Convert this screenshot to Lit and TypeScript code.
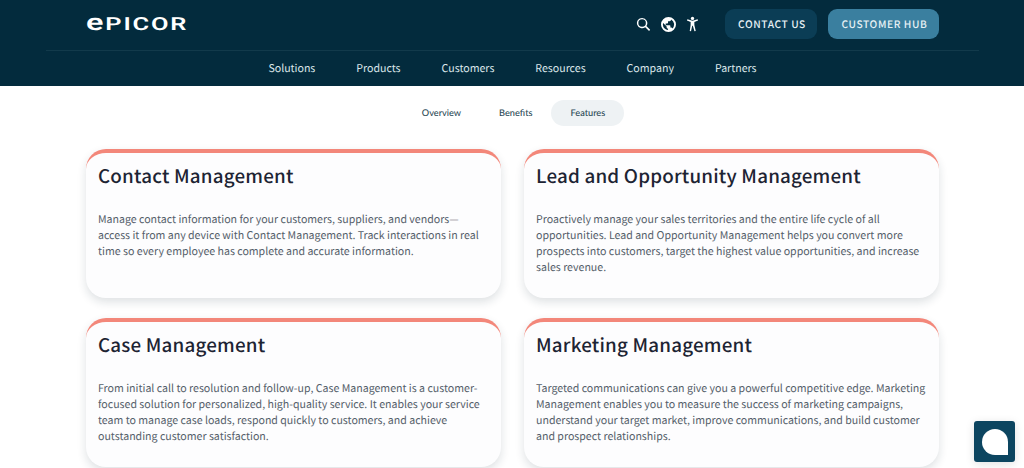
import { LitElement, html, css } from 'lit';
import { customElement } from 'lit/decorators.js';

const NAV = ['Solutions', 'Products', 'Customers', 'Resources', 'Company', 'Partners'];
const TABS = ['Overview', 'Benefits', 'Features'];
const CARDS = [
	{
		title: 'Contact Management',
		text: 'Manage contact information for your customers, suppliers, and vendors—access it from any device with Contact Management. Track interactions in real time so every employee has complete and accurate information.'
	},
	{
		title: 'Lead and Opportunity Management',
		text: 'Proactively manage your sales territories and the entire life cycle of all opportunities. Lead and Opportunity Management helps you convert more prospects into customers, target the highest value opportunities, and increase sales revenue.'
	},
	{
		title: 'Case Management',
		text: 'From initial call to resolution and follow-up, Case Management is a customer-focused solution for personalized, high-quality service. It enables your service team to manage case loads, respond quickly to customers, and achieve outstanding customer satisfaction.'
	},
	{
		title: 'Marketing Management',
		text: 'Targeted communications can give you a powerful competitive edge. Marketing Management enables you to measure the success of marketing campaigns, understand your target market, improve communications, and build customer and prospect relationships.'
	}
];

@customElement('app-root')
export class AppRoot extends LitElement {
	static styles = [
		css`
			:host {
				display: block;
				position: relative;
				height: 468px;
				overflow: hidden;
				background: #fff;
				font-family: 'Noto Sans CJK SC', 'Noto Sans', sans-serif;
				text-rendering: geometricPrecision;
			}

			/* header */
			.top {
				background: #032b3d;
				height: 86px;
				box-sizing: border-box;
				padding: 0 85px 0 86px;
			}
			.top-row {
				display: flex;
				align-items: center;
				height: 50px;
				border-bottom: 1px solid #123a4b;
				margin: 0 -40px;
				padding: 0 40px;
			}
			.logo {
				color: #fff;
				font: 600 18px/20px Roboto, sans-serif;
				letter-spacing: 1.3px;
				transform: scaleX(1.41);
				transform-origin: left center;
				margin: -2px 0 0;
				white-space: nowrap;
			}
			.logo b {
				font-weight: 600;
				font-size: 23px;
				line-height: 20px;
			}
			.tools {
				margin-left: auto;
				display: flex;
				align-items: center;
				gap: 10px;
				margin-top: -2px;
			}
			.tools svg {
				display: block;
				fill: #fff;
			}
			.btn {
				box-sizing: border-box;
				height: 30px;
				margin-top: -3px;
				padding-left: 2px;
				display: flex;
				align-items: center;
				justify-content: center;
				border-radius: 9px;
				color: #e6f0f4;
				font-size: 10.2px;
				font-weight: 500;
				letter-spacing: 0.6px;
			}
			.btn.contact {
				width: 92px;
				margin-left: 26px;
				background: #0b3d55;
			}
			.btn.hub {
				width: 111px;
				margin-left: 11px;
				background: #3a7f9f;
			}
			.nav {
				display: flex;
				justify-content: center;
				gap: 41px;
				height: 36px;
				align-items: center;
				color: #dbe6ea;
				font-size: 10.6px;
				padding-bottom: 2px;
				box-sizing: border-box;
			}

			/* anchor tabs */
			.tabs {
				display: flex;
				justify-content: center;
				align-items: center;
				height: 26px;
				margin-top: 14px;
				color: #2c4a56;
				font: 500 9.2px Lato, sans-serif;
				padding-left: 3px;
			}
			.tab {
				padding: 0 19px;
				height: 26px;
				line-height: 26px;
				border-radius: 13px;
			}
			.tab.active {
				background: #eef2f4;
			}

			/* cards */
			.cards {
				display: grid;
				grid-template-columns: 415px 415px;
				grid-auto-rows: 149px;
				column-gap: 23px;
				row-gap: 20px;
				padding: 23px 0 0 86px;
			}
			.card {
				box-sizing: border-box;
				border-top: 4px solid #f3877a;
				border-radius: 20px;
				background: #fdfdfe;
				box-shadow: 0 4px 10px rgba(20, 40, 60, 0.14);
				padding: 9px 12px 0;
			}
			.card h3 {
				margin: 0;
				font-size: 18.8px;
				line-height: 27px;
				font-weight: 500;
				color: #1d2433;
				letter-spacing: 0.2px;
			}
			.card p {
				margin: 22.5px 0 0;
				font-size: 10.6px;
				line-height: 16px;
				color: #55606a;
			}

			/* chat launcher */
			.chat {
				position: absolute;
				left: 974px;
				top: 421px;
				width: 41px;
				height: 41px;
				border-radius: 3px;
				background: #0c4560;
				display: flex;
				align-items: center;
				justify-content: center;
				box-shadow: 0 2px 10px rgba(0, 0, 0, 0.12);
			}
			.chat span {
				width: 26px;
				height: 26px;
				background: #fff;
				border-radius: 50% 50% 0 50%;
			}
		`
	];

	render() {
		return html`
			<div class="top">
				<div class="top-row">
					<div class="logo"><b>e</b>PICOR</div>
					<div class="tools">
						<svg width="15" height="15" viewBox="0 0 16 16">
							<path d="M6.500 1a5.500 5.500 0 1 0 3.400 9.800l4 4 1.200-1.200-4-4A5.500 5.500 0 0 0 6.500 1zm0 1.500a4 4 0 1 1 0 8 4 4 0 0 1 0-8z" />
						</svg>
						<svg width="15" height="15" viewBox="0 0 16 16">
							<path d="M8 0a8 8 0 1 0 0 16A8 8 0 0 0 8 0zM2 8c0-.6.1-1.200.3-1.700L6 10v1c0 .8.700 1.500 1.500 1.500v1.400A6 6 0 0 1 2 8zm10.200 4.200c-.2-.6-.7-1-1.400-1H10V9.500c0-.4-.3-.8-.8-.8H5V7h1.700c.4 0 .8-.3.800-.8V4.500h1.700c.8 0 1.500-.7 1.500-1.500v-.4a6 6 0 0 1 1.500 9.600z" />
						</svg>
						<svg width="13" height="16" viewBox="0 0 14 16">
							<circle cx="7" cy="2" r="1.800" />
							<path d="M1 4.300l.5-1.300L7 4.600 12.500 3l.5 1.300-4 1.500v3.400l1.500 6.300-1.400.4L7.300 10h-.6l-1.300 5.900-1.400-.4L5 9.200V5.800z" />
						</svg>
					</div>
					<div class="btn contact">CONTACT US</div>
					<div class="btn hub">CUSTOMER HUB</div>
				</div>
				<nav class="nav">${NAV.map((item) => html`<span>${item}</span>`)}</nav>
			</div>
			<div class="tabs">
				${TABS.map((tab) => html`<div class="tab ${tab === 'Features' ? 'active' : ''}">${tab}</div>`)}
			</div>
			<div class="cards">
				${CARDS.map(
					(card) => html`
						<div class="card">
							<h3>${card.title}</h3>
							<p>${card.text}</p>
						</div>
					`
				)}
			</div>
			<div class="chat"><span></span></div>
		`;
	}
}
